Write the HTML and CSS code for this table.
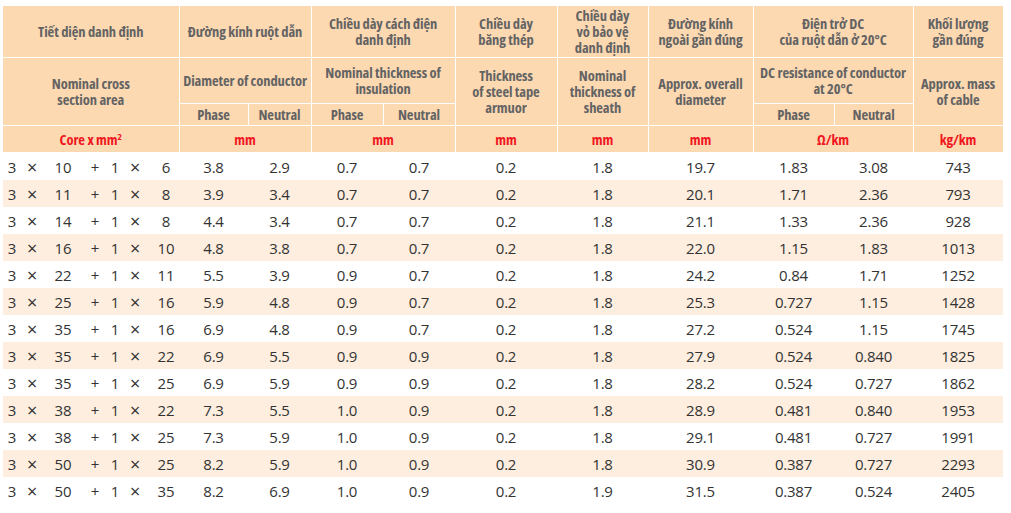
FILE: index.html
```html
<!DOCTYPE html>
<html lang="vi">
<head>
<meta charset="utf-8">
<title>Cable table</title>
<link rel="stylesheet" href="styles.css">
</head>
<body>
<table class="spec">
  <colgroup>
    <col class="c-sec"><col class="c-p1"><col class="c-n1"><col class="c-p2"><col class="c-n2">
    <col class="c-arm"><col class="c-sh"><col class="c-od"><col class="c-p3"><col class="c-n3"><col class="c-mass">
  </colgroup>
  <thead>
    <tr class="h-vn">
      <th>Tiết diện danh định</th>
      <th colspan="2">Đường kính ruột dẫn</th>
      <th colspan="2">Chiều dày cách điện<br>danh định</th>
      <th>Chiều dày<br>băng thép</th>
      <th>Chiều dày<br>vỏ bảo vệ<br>danh định</th>
      <th>Đường kính<br>ngoài gần đúng</th>
      <th colspan="2">Điện trở DC<br>của ruột dẫn ở 20°C</th>
      <th>Khối lượng<br>gần đúng</th>
    </tr>
    <tr class="h-en">
      <th rowspan="2">Nominal cross<br>section area</th>
      <th colspan="2">Diameter of conductor</th>
      <th colspan="2">Nominal thickness of<br>insulation</th>
      <th rowspan="2">Thickness<br>of steel tape<br>armuor</th>
      <th rowspan="2">Nominal<br>thickness of<br>sheath</th>
      <th rowspan="2">Approx. overall<br>diameter</th>
      <th colspan="2">DC resistance of conductor<br>at 20°C</th>
      <th rowspan="2">Approx. mass<br>of cable</th>
    </tr>
    <tr class="h-sub">
      <th>Phase</th><th>Neutral</th>
      <th>Phase</th><th>Neutral</th>
      <th>Phase</th><th>Neutral</th>
    </tr>
    <tr class="h-unit">
      <th>Core x mm<sup>2</sup></th>
      <th colspan="2">mm</th>
      <th colspan="2">mm</th>
      <th>mm</th>
      <th>mm</th>
      <th>mm</th>
      <th colspan="2">Ω/km</th>
      <th>kg/km</th>
    </tr>
  </thead>
  <tbody>
    <tr><td class="core"><span>3</span><span class="x">×</span><span>10</span><span>+</span><span>1</span><span class="x">×</span><span>6</span></td><td>3.8</td><td>2.9</td><td>0.7</td><td>0.7</td><td>0.2</td><td>1.8</td><td>19.7</td><td>1.83</td><td>3.08</td><td>743</td></tr>
    <tr><td class="core"><span>3</span><span class="x">×</span><span>11</span><span>+</span><span>1</span><span class="x">×</span><span>8</span></td><td>3.9</td><td>3.4</td><td>0.7</td><td>0.7</td><td>0.2</td><td>1.8</td><td>20.1</td><td>1.71</td><td>2.36</td><td>793</td></tr>
    <tr><td class="core"><span>3</span><span class="x">×</span><span>14</span><span>+</span><span>1</span><span class="x">×</span><span>8</span></td><td>4.4</td><td>3.4</td><td>0.7</td><td>0.7</td><td>0.2</td><td>1.8</td><td>21.1</td><td>1.33</td><td>2.36</td><td>928</td></tr>
    <tr><td class="core"><span>3</span><span class="x">×</span><span>16</span><span>+</span><span>1</span><span class="x">×</span><span>10</span></td><td>4.8</td><td>3.8</td><td>0.7</td><td>0.7</td><td>0.2</td><td>1.8</td><td>22.0</td><td>1.15</td><td>1.83</td><td>1013</td></tr>
    <tr><td class="core"><span>3</span><span class="x">×</span><span>22</span><span>+</span><span>1</span><span class="x">×</span><span>11</span></td><td>5.5</td><td>3.9</td><td>0.9</td><td>0.7</td><td>0.2</td><td>1.8</td><td>24.2</td><td>0.84</td><td>1.71</td><td>1252</td></tr>
    <tr><td class="core"><span>3</span><span class="x">×</span><span>25</span><span>+</span><span>1</span><span class="x">×</span><span>16</span></td><td>5.9</td><td>4.8</td><td>0.9</td><td>0.7</td><td>0.2</td><td>1.8</td><td>25.3</td><td>0.727</td><td>1.15</td><td>1428</td></tr>
    <tr><td class="core"><span>3</span><span class="x">×</span><span>35</span><span>+</span><span>1</span><span class="x">×</span><span>16</span></td><td>6.9</td><td>4.8</td><td>0.9</td><td>0.7</td><td>0.2</td><td>1.8</td><td>27.2</td><td>0.524</td><td>1.15</td><td>1745</td></tr>
    <tr><td class="core"><span>3</span><span class="x">×</span><span>35</span><span>+</span><span>1</span><span class="x">×</span><span>22</span></td><td>6.9</td><td>5.5</td><td>0.9</td><td>0.9</td><td>0.2</td><td>1.8</td><td>27.9</td><td>0.524</td><td>0.840</td><td>1825</td></tr>
    <tr><td class="core"><span>3</span><span class="x">×</span><span>35</span><span>+</span><span>1</span><span class="x">×</span><span>25</span></td><td>6.9</td><td>5.9</td><td>0.9</td><td>0.9</td><td>0.2</td><td>1.8</td><td>28.2</td><td>0.524</td><td>0.727</td><td>1862</td></tr>
    <tr><td class="core"><span>3</span><span class="x">×</span><span>38</span><span>+</span><span>1</span><span class="x">×</span><span>22</span></td><td>7.3</td><td>5.5</td><td>1.0</td><td>0.9</td><td>0.2</td><td>1.8</td><td>28.9</td><td>0.481</td><td>0.840</td><td>1953</td></tr>
    <tr><td class="core"><span>3</span><span class="x">×</span><span>38</span><span>+</span><span>1</span><span class="x">×</span><span>25</span></td><td>7.3</td><td>5.9</td><td>1.0</td><td>0.9</td><td>0.2</td><td>1.8</td><td>29.1</td><td>0.481</td><td>0.727</td><td>1991</td></tr>
    <tr><td class="core"><span>3</span><span class="x">×</span><span>50</span><span>+</span><span>1</span><span class="x">×</span><span>25</span></td><td>8.2</td><td>5.9</td><td>1.0</td><td>0.9</td><td>0.2</td><td>1.8</td><td>30.9</td><td>0.387</td><td>0.727</td><td>2293</td></tr>
    <tr><td class="core"><span>3</span><span class="x">×</span><span>50</span><span>+</span><span>1</span><span class="x">×</span><span>35</span></td><td>8.2</td><td>6.9</td><td>1.0</td><td>0.9</td><td>0.2</td><td>1.9</td><td>31.5</td><td>0.387</td><td>0.524</td><td>2405</td></tr>
  </tbody>
</table>
</body>
</html>
```
FILE: styles.css
```css
html, body {
  margin: 0;
  padding: 0;
  background: #ffffff;
}
body {
  padding: 6px 0 0 3px;
}
.spec {
  border-collapse: collapse;
  table-layout: fixed;
  width: 1000px;
  font-family: "Open Sans", "Noto Sans", sans-serif;
}
.c-sec { width: 176px; }
.c-p1 { width: 69px; }
.c-n1 { width: 63px; }
.c-p2 { width: 72px; }
.c-n2 { width: 72px; }
.c-arm { width: 102px; }
.c-sh { width: 91px; }
.c-od { width: 105px; }
.c-p3 { width: 81px; }
.c-n3 { width: 79px; }
.c-mass { width: 90px; }

.spec th {
  background: #fdd9b2;
  border: 1px solid #ffffff;
  color: #636363;
  font-weight: 700;
  font-size: 14.5px;
  font-stretch: 75%;
  letter-spacing: -0.1px;
  line-height: 16px;
  padding: 2px 0 0 0;
  text-align: center;
  vertical-align: middle;
  white-space: nowrap;
}
.spec tr:first-child th { border-top: none; }
.spec th:first-child { border-left: none; }
.h-vn { height: 51px; }
.h-en { height: 46px; }
.h-sub { height: 22px; }
.h-unit { height: 27px; }
.h-unit th {
  color: #f0161e;
  font-size: 14.5px;
}
.h-unit sup {
  font-size: 9.5px;
  line-height: 0;
  vertical-align: 5px;
}

.spec td {
  height: 27px;
  padding: 2px 0 0 0;
  box-sizing: border-box;
  text-align: center;
  vertical-align: middle;
  color: #333333;
  font-size: 15px;
  letter-spacing: -0.2px;
  white-space: nowrap;
}
.spec tbody tr:nth-child(even) td {
  background: #fdeedf;
}
.spec td.core {
  display: grid;
  grid-template-columns: 16px 24px 38px 26px 14px 26px 36px;
  align-items: center;
  justify-items: center;
  padding-left: 1px;
}
.spec td.core .x {
  font-size: 18px;
  line-height: 1;
}
```
